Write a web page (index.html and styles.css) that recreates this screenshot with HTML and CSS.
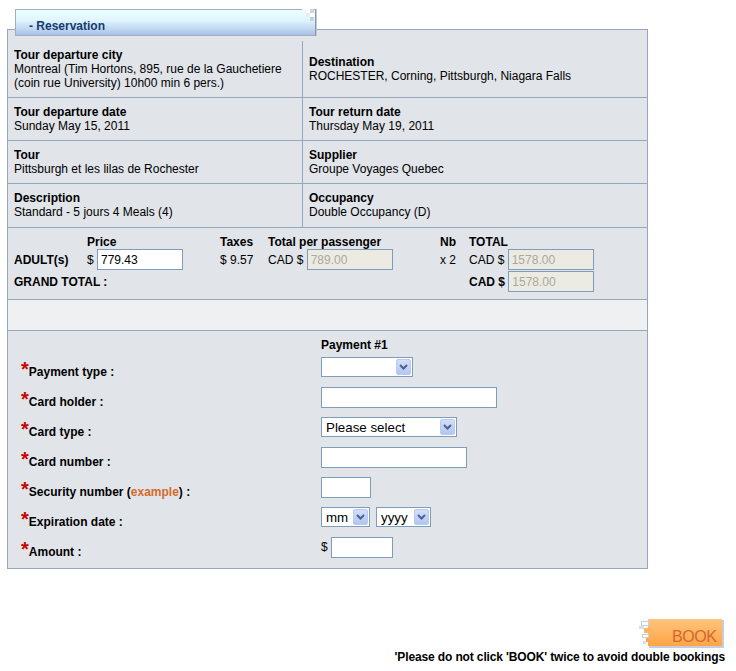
FILE: index.html
```html
<!DOCTYPE html>
<html lang="en">
<head>
<meta charset="utf-8">
<title>Reservation</title>
<link rel="stylesheet" href="styles.css">
</head>
<body>
<div class="page">
  <div class="tab">
    <span class="tab-title">- Reservation</span>
    <svg class="tab-corner" width="14" height="12" viewBox="0 0 14 12">
      <rect x="2" y="0" width="4" height="2" fill="#f4f8fb"/>
      <rect x="6" y="0" width="4" height="4" fill="#ffffff"/>
      <rect x="10" y="0" width="4" height="4" fill="#d0d6e0"/>
      <rect x="6" y="4" width="4" height="4" fill="#e6eef8"/>
      <rect x="10" y="4" width="4" height="4" fill="#ffffff"/>
      <rect x="10" y="8" width="4" height="4" fill="#c8d0dc"/>
    </svg>
  </div>
  <div class="box">
    <div class="info">
      <div class="cell l"><b>Tour departure city</b><span>Montreal (Tim Hortons, 895, rue de la Gauchetiere (coin rue University) 10h00 min 6 pers.)</span></div>
      <div class="cell r"><b>Destination</b><span>ROCHESTER, Corning, Pittsburgh, Niagara Falls</span></div>
      <div class="cell l"><b>Tour departure date</b><span>Sunday May 15, 2011</span></div>
      <div class="cell r"><b>Tour return date</b><span>Thursday May 19, 2011</span></div>
      <div class="cell l"><b>Tour</b><span>Pittsburgh et les lilas de Rochester</span></div>
      <div class="cell r"><b>Supplier</b><span>Groupe Voyages Quebec</span></div>
      <div class="cell l last"><b>Description</b><span>Standard - 5 jours 4 Meals (4)</span></div>
      <div class="cell r last"><b>Occupancy</b><span>Double Occupancy (D)</span></div>
    </div>

    <div class="price">
      <div class="prow head">
        <span></span>
        <b>Price</b>
        <b>Taxes</b>
        <b>Total per passenger</b>
        <b>Nb</b>
        <b>TOTAL</b>
      </div>
      <div class="prow line">
        <b>ADULT(s)</b>
        <span class="money">$ <input class="inp w86" type="text" value="779.43"></span>
        <span>$ 9.57</span>
        <span class="money">CAD $ <input class="inp w86" type="text" value="789.00" disabled></span>
        <span>x 2</span>
        <span class="money">CAD $ <input class="inp w86" type="text" value="1578.00" disabled></span>
      </div>
      <div class="prow line second">
        <b class="grand">GRAND TOTAL :</b>
        <b class="money">CAD $ <input class="inp w86" type="text" value="1578.00" disabled></b>
      </div>
    </div>

    <div class="spacer"></div>

    <div class="payment">
      <div class="frow-head"><span></span><b>Payment #1</b></div>
      <div class="frow">
        <span class="flabel"><span class="req">*</span>Payment type :</span>
        <span class="fctrl">
          <span class="sel w92"><select><option></option></select><span class="sel-btn"><svg width="9" height="6" viewBox="0 0 9 6"><path d="M1 1 L4.5 4.5 L8 1" fill="none" stroke="#4e6288" stroke-width="2"/></svg></span></span>
        </span>
      </div>
      <div class="frow">
        <span class="flabel"><span class="req">*</span>Card holder :</span>
        <span class="fctrl"><input class="inp w176" type="text"></span>
      </div>
      <div class="frow">
        <span class="flabel"><span class="req">*</span>Card type :</span>
        <span class="fctrl">
          <span class="sel w136"><select><option>Please select</option></select><span class="sel-btn"><svg width="9" height="6" viewBox="0 0 9 6"><path d="M1 1 L4.5 4.5 L8 1" fill="none" stroke="#4e6288" stroke-width="2"/></svg></span></span>
        </span>
      </div>
      <div class="frow">
        <span class="flabel"><span class="req">*</span>Card number :</span>
        <span class="fctrl"><input class="inp w146" type="text"></span>
      </div>
      <div class="frow">
        <span class="flabel"><span class="req">*</span>Security number (<a class="example" href="#">example</a>) :</span>
        <span class="fctrl"><input class="inp w50" type="text"></span>
      </div>
      <div class="frow">
        <span class="flabel"><span class="req">*</span>Expiration date :</span>
        <span class="fctrl gap6">
          <span class="sel w49"><select><option>mm</option></select><span class="sel-btn"><svg width="9" height="6" viewBox="0 0 9 6"><path d="M1 1 L4.5 4.5 L8 1" fill="none" stroke="#4e6288" stroke-width="2"/></svg></span></span>
          <span class="sel w55"><select><option>yyyy</option></select><span class="sel-btn"><svg width="9" height="6" viewBox="0 0 9 6"><path d="M1 1 L4.5 4.5 L8 1" fill="none" stroke="#4e6288" stroke-width="2"/></svg></span></span>
        </span>
      </div>
      <div class="frow">
        <span class="flabel"><span class="req">*</span>Amount :</span>
        <span class="fctrl gap3">$ <input class="inp w62" type="text"></span>
      </div>
    </div>
  </div>

  <div class="actions">
    <button class="book" type="button">
      <svg class="book-bg" width="86" height="30" viewBox="0 0 86 30">
        <defs>
          <linearGradient id="bg" x1="0" y1="0" x2="0" y2="1">
            <stop offset="0" stop-color="#ffc47c"/>
            <stop offset="1" stop-color="#ffa447"/>
          </linearGradient>
        </defs>
        <rect x="10" y="2" width="75" height="28" fill="#c3cddc"/>
        <rect x="9" y="1" width="74" height="27" fill="url(#bg)"/>
        <rect x="2.5" y="3.5" width="7" height="4" fill="#ffffff" stroke="#c5d0e0"/>
        <rect x="0" y="8" width="5" height="3" fill="#d6deea"/>
        <rect x="5" y="10" width="5" height="5" fill="#ffb465"/>
        <rect x="3.5" y="16.5" width="6" height="3" fill="#ffffff" stroke="#c5d0e0"/>
        <rect x="7" y="20" width="3" height="4" fill="#ffa850"/>
        <rect x="4" y="23" width="3" height="3" fill="#d6deea"/>
      </svg>
      <span class="book-label">BOOK</span>
    </button>
    <p class="note">'Please do not click 'BOOK' twice to avoid double bookings</p>
  </div>
</div>
</body>
</html>
```

FILE: styles.css
```css
* { box-sizing: border-box; }

body {
  margin: 0;
  font-family: "Liberation Sans", Arial, sans-serif;
  font-size: 12px;
  line-height: 14px;
  color: #000;
  background: #fff;
}

.page {
  padding-top: 9px;
}

/* Tab */
.tab {
  position: relative;
  z-index: 1;
  width: 301px;
  height: 27px;
  margin: 0 0 -7px 15px;
  padding: 9px 0 0 13px;
  border: 1px solid #a3aec1;
  border-right-color: #8c96a8;
  box-shadow: 1px 0 0 #c4cad4;
  background: linear-gradient(#e9ffff 0%, #e0f6fd 40%, #c2d8f2 75%, #a7c0e6 100%);
  color: #163a70;
  font-weight: bold;
}

.tab-corner {
  position: absolute;
  top: -1px;
  right: 1px;
}

/* Main box */
.box {
  margin-left: 7px;
  width: 641px;
  border: 1px solid #98a6bc;
  background: #e1e4e9;
}

.info {
  display: grid;
  grid-template-columns: 295px 1fr;
  padding-top: 11px;
}

.cell {
  display: flex;
  flex-direction: column;
  justify-content: center;
  padding: 7px 6px;
  border-bottom: 1px solid #98a6bc;
}

.cell.l {
  border-right: 1px solid #98a6bc;
}

.cell.last {
  padding-bottom: 8px;
}

/* Price */
.price {
  padding: 7px 0 7px 6px;
  border-bottom: 1px solid #98a6bc;
}

.prow {
  display: grid;
  grid-template-columns: 73px 133px 48px 172px 29px 1fr;
  align-items: center;
}

.prow.head {
  height: 14px;
}

.prow.line {
  height: 21px;
}

.prow.second {
  margin-top: 1px;
}

.grand {
  grid-column: 1 / 6;
}

.money {
  display: flex;
  align-items: center;
  white-space: pre;
}

.inp {
  height: 21px;
  border: 1px solid #7f9db9;
  background: #fff;
  padding: 0 3px;
  font-family: "Liberation Sans", Arial, sans-serif;
  font-size: 12px;
  color: #000;
  outline: none;
  margin: 0;
}

.inp:disabled {
  background: #ebebe4;
  color: #aca899;
}

.w86 { width: 86px; }
.w176 { width: 176px; }
.w146 { width: 146px; }
.w50 { width: 50px; }
.w62 { width: 62px; }

.spacer {
  height: 31px;
  background: #eff0f2;
  border-bottom: 1px solid #98a6bc;
}

/* Payment */
.payment {
  padding: 7px 0 6px;
}

.frow-head {
  display: grid;
  grid-template-columns: 313px 1fr;
  height: 14px;
}

.frow {
  display: grid;
  grid-template-columns: 313px 1fr;
  height: 30px;
  align-items: center;
}

.flabel {
  padding: 3px 0 0 13px;
  font-weight: bold;
}

.req {
  color: #cc0000;
  font-size: 20px;
  line-height: 20px;
}

.example {
  color: #d46a2c;
  text-decoration: none;
}

.fctrl {
  display: flex;
  align-items: center;
}

.gap6 { gap: 6px; }
.gap3 { gap: 3px; }

.sel {
  display: inline-flex;
  align-items: center;
  height: 20px;
  border: 1px solid #7f9db9;
  background: #fff;
  padding-right: 1px;
}

.sel select {
  -webkit-appearance: none;
  appearance: none;
  flex: 1;
  min-width: 0;
  height: 18px;
  border: 0;
  margin: 0;
  padding: 0 0 0 4px;
  background: transparent;
  font-family: "Liberation Sans", Arial, sans-serif;
  font-size: 13.33px;
  color: #000;
  outline: none;
}

.sel-btn {
  display: flex;
  align-items: center;
  justify-content: center;
  width: 15px;
  height: 16px;
  border: 1px solid #b8caee;
  border-radius: 2px;
  background: linear-gradient(#d2defc, #b2c5f2);
}

.w92 { width: 92px; }
.w136 { width: 136px; }
.w49 { width: 49px; }
.w55 { width: 55px; }

/* Actions */
.actions {
  display: flex;
  flex-direction: column;
  align-items: flex-end;
  padding-right: 11px;
  margin-top: 49px;
}

.book {
  position: relative;
  width: 86px;
  height: 30px;
  margin: 0;
  padding: 7px 0 0 33px;
  border: 0;
  background: none;
  text-align: left;
  font-family: "Liberation Sans", Arial, sans-serif;
  font-size: 16px;
  line-height: 16px;
  letter-spacing: -0.4px;
  color: #cf6a2e;
  cursor: pointer;
}

.book-bg {
  position: absolute;
  top: 0;
  left: 0;
}

.book-label {
  position: relative;
  display: block;
}

.note {
  margin: 2px 0 0;
  font-weight: bold;
  letter-spacing: -0.13px;
}
```
